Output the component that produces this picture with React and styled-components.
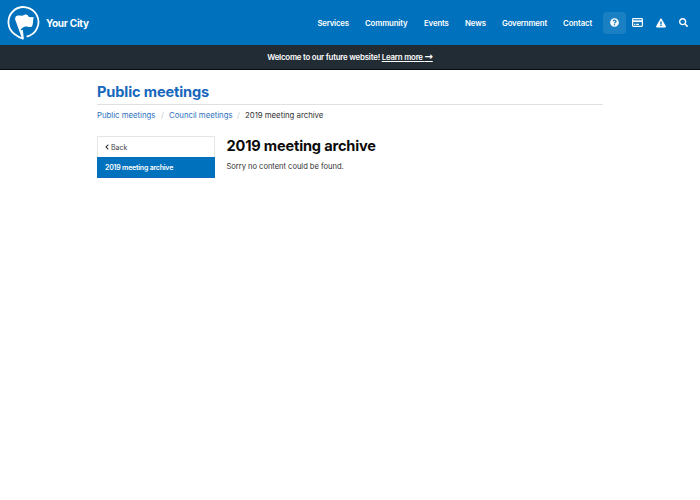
import React from "react";
import styled, { createGlobalStyle } from "styled-components";
import { FaQuestionCircle, FaExclamationTriangle, FaSearch, FaChevronLeft } from "react-icons/fa";

const GlobalStyle = createGlobalStyle`
  * { box-sizing: border-box; }
  body { margin: 0; background: #fff; color: #111; font-family: Inter, "Liberation Sans", sans-serif; }
  a { color: inherit; text-decoration: none; }
`;

const Header = styled.header`
  height: 45px;
  padding: 0 7px;
  display: flex;
  align-items: center;
  background: #0071bd;
  color: #fff;
`;
const Brand = styled.a`
  display: flex;
  align-items: center;
  gap: 5px;
  font-size: 10px;
  line-height: 14px;
  font-weight: 700;
  letter-spacing: -0.25px;
  white-space: nowrap;
`;
const Logo = styled.svg`
  width: 34px;
  height: 36px;
  display: block;
`;
const Nav = styled.nav`
  margin-left: auto;
  display: flex;
  gap: 16px;
`;
const NavLink = styled.a`
  width: ${(p) => p.$w}px;
  font-size: 7.8px;
  line-height: 12px;
  font-weight: 600;
  letter-spacing: ${(p) => p.$track}px;
  white-space: nowrap;
`;
const Actions = styled.div`
  margin-left: 10px;
  margin-right: -2px;
  display: flex;
`;
const Action = styled.button`
  width: 23px;
  height: 22px;
  padding: 0;
  border: 0;
  border-radius: 4px;
  display: flex;
  align-items: center;
  justify-content: center;
  color: #fff;
  font-size: ${(p) => p.$size || 9}px;
  background: ${(p) => (p.$active ? "#1b7fc3" : "transparent")};
`;
const Banner = styled.div`
  height: 25px;
  border-bottom: 1px solid #080b0e;
  padding-bottom: 1px;
  background: #222c35;
  color: #fff;
  display: flex;
  align-items: center;
  justify-content: center;
  font-size: 7.9px;
  font-weight: 600;
  line-height: 12px;
  letter-spacing: -0.22px;
  white-space: pre;
`;
const More = styled.a`
  text-decoration: underline;
  text-decoration-thickness: 1px;
  text-underline-offset: 1px;
`;
const Arrow = styled.span`
  font-family: "DejaVu Sans", sans-serif;
  font-size: 10px;
  line-height: 1;
`;
const Page = styled.div`
  width: 506px;
  margin: 0 auto;
`;
const SectionTitle = styled.div`
  height: 35px;
  padding-top: 12px;
  border-bottom: 1px solid #dfe1e3;
  color: #1767bc;
  font-size: 14.6px;
  line-height: 20px;
  font-weight: 700;
  letter-spacing: -0.14px;
`;
const Crumbs = styled.div`
  padding-top: 4px;
  display: flex;
  font-size: 7.8px;
  line-height: 12px;
  white-space: nowrap;
`;
const Crumb = styled.a`
  width: ${(p) => p.$w}px;
  color: ${(p) => (p.$current ? "#333" : "#2f73bd")};
  letter-spacing: -0.02px;
`;
const Slash = styled.span`
  width: 13px;
  padding-left: 5px;
  color: #c5c9cc;
`;
const Columns = styled.div`
  margin-top: 15px;
  display: grid;
  grid-template-columns: 118px 1fr;
  gap: 12px;
`;
const Menu = styled.nav`
  height: 42px;
  font-size: 7px;
`;
const Back = styled.a`
  height: 21px;
  padding: 0 0 0 6px;
  border: 1px solid #e3e6e8;
  border-bottom: 0;
  display: flex;
  align-items: center;
  gap: 1px;
  color: #444;
  svg { color: #222; font-size: 6px; }
`;
const Current = styled.a`
  height: 21px;
  padding-left: 8px;
  display: flex;
  align-items: center;
  background: #0071bd;
  border-bottom: 1px solid #1767bc;
  color: #fff;
  font-weight: 600;
  letter-spacing: -0.22px;
`;
const Heading = styled.h1`
  margin: 0 0 0 -0.5px;
  font-size: 14.6px;
  line-height: 20px;
  font-weight: 700;
  letter-spacing: -0.18px;
  color: #0b0b0b;
`;
const Text = styled.p`
  margin: 5px 0 0 -0.5px;
  font-size: 7.6px;
  line-height: 12px;
  letter-spacing: -0.04px;
  color: #333;
`;

const nav = [
  ["Services", 31.5, -0.22],
  ["Community", 43, -0.12],
  ["Events", 25, -0.12],
  ["News", 21, -0.05],
  ["Government", 45, -0.16],
  ["Contact", 30, -0.1],
];

function FlagLogo() {
  return (
    <Logo viewBox="0 0 34 36" fill="none">
      <path d="M19.6 31.7A15 15 0 1 0 8.4 29.7Q11.8 32.8 16 33.6" stroke="#fff" strokeWidth="1.8" />
      <path d="M8.6 13.2L16 33.6L15 25" stroke="#fff" strokeWidth="1.7" strokeLinejoin="round" />
      <path d="M8.2 12.2C11 8.8 14 12 17.7 9.8C19.4 8.9 21 9.7 21.8 12L26.8 12.2C25.6 14.6 26.6 17.4 25.2 21.2C22.3 23.4 20.7 20.8 17.4 21.8C15.2 22.6 14.8 24 13 25Z" fill="#fff" />
    </Logo>
  );
}

function CardIcon() {
  return (
    <svg width="11" height="9" viewBox="0 0 11 9">
      <rect x="0.6" y="0.6" width="9.8" height="7.8" rx="0.8" fill="none" stroke="#fff" strokeWidth="1.2" />
      <path d="M0.5 3.2H10.5" stroke="#fff" strokeWidth="1.8" />
      <path d="M2 6.4H3.4M4.2 6.4H7" stroke="#fff" strokeWidth="1.2" />
    </svg>
  );
}

export default function App() {
  return (
    <>
      <GlobalStyle />
      <Header>
        <Brand href="#"><FlagLogo />Your City</Brand>
        <Nav>
          {nav.map(([label, w, track]) => (
            <NavLink key={label} href="#" $w={w} $track={track}>{label}</NavLink>
          ))}
        </Nav>
        <Actions>
          <Action $active aria-label="Help"><FaQuestionCircle /></Action>
          <Action aria-label="Payments"><CardIcon /></Action>
          <Action $size={10} aria-label="Alerts"><FaExclamationTriangle /></Action>
          <Action aria-label="Search"><FaSearch /></Action>
        </Actions>
      </Header>
      <Banner>Welcome to our future website! <More href="#">Learn more <Arrow>→</Arrow></More></Banner>
      <Page>
        <SectionTitle>Public meetings</SectionTitle>
        <Crumbs>
          <Crumb href="#" $w={59}>Public meetings</Crumb>
          <Slash>/</Slash>
          <Crumb href="#" $w={63}>Council meetings</Crumb>
          <Slash>/</Slash>
          <Crumb as="span" $current $w={80}>2019 meeting archive</Crumb>
        </Crumbs>
        <Columns>
          <Menu>
            <Back href="#"><FaChevronLeft />Back</Back>
            <Current href="#">2019 meeting archive</Current>
          </Menu>
          <main>
            <Heading>2019 meeting archive</Heading>
            <Text>Sorry no content could be found.</Text>
          </main>
        </Columns>
      </Page>
    </>
  );
}
